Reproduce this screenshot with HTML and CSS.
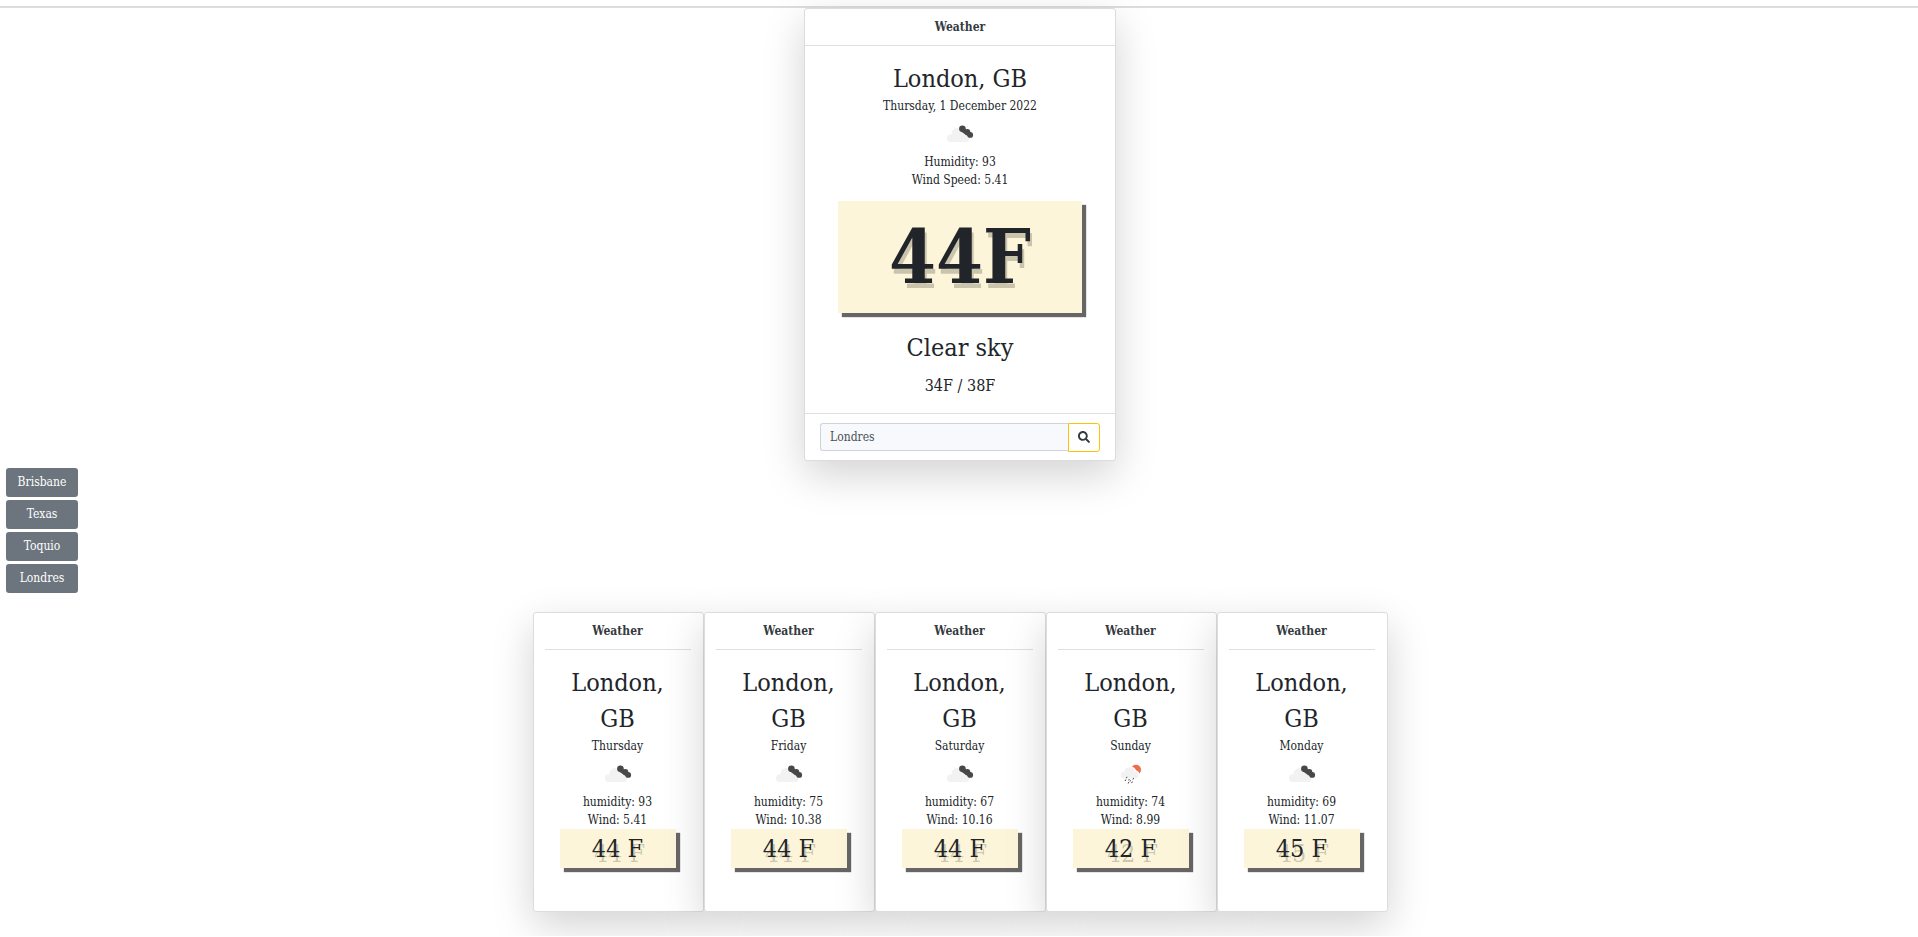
FILE: index.html
```html
<!DOCTYPE html>
<html lang="en">
<head>
<meta charset="utf-8">
<title>Weather</title>
<link rel="stylesheet" href="styles.css">
</head>
<body>
<svg class="sprite" aria-hidden="true">
  <symbol id="clouds" viewBox="0 0 28 20">
    <g fill="#f2f2f2"><circle cx="11.200" cy="9.600" r="5.600"/><circle cx="4.900" cy="14.200" r="3.900"/><circle cx="19.600" cy="14.200" r="3.900"/><path d="M4.900 18.100V12l6-4 5 1 3.700 9.100z"/><path d="M14 6l7 6v4h-9z"/></g>
    <g fill="#48484a"><circle cx="16.400" cy="4.700" r="3.300"/><circle cx="21.300" cy="7.900" r="3"/><circle cx="24.200" cy="10.900" r="2.900"/><path d="M15 7.500l8 5.500 2-4-7-5z"/></g>
  </symbol>
  <symbol id="rain" viewBox="0 0 28 20">
    <circle fill="#ec6e4c" cx="19" cy="5.800" r="5"/>
    <path fill="#fff" d="M12 1l2 1.500a6 6 0 0 1 5 3.800 5 5 0 0 1 3.500 5L12 13z"/>
    <path fill="#f2f2f2" d="M7.200 14.500a3.300 3.300 0 0 1 0-6.800A4.600 4.600 0 0 1 14 3.800a4.500 4.500 0 0 1 4 3.900 3.500 3.500 0 0 1 1 6.800z"/>
    <path stroke="#48484a" stroke-width="1" fill="none" d="M10 12.800l-.6 1.400M8.800 15.500l-.7 1.500M12.300 15l-.6 1.500M13.600 16.300l-.5 1.200M11.800 18l-.6 1.500M16.600 14l-.7 1.500M15.300 17.500l-.6 1.600"/>
  </symbol>
</svg>
<header class="topbar"></header>
<main class="page">
  <section class="card today">
    <h1 class="card-head">Weather</h1>
    <div class="card-body">
      <h2 class="place">London, GB</h2>
      <p>Thursday, 1 December 2022</p>
      <svg class="sky"><use href="#clouds"/></svg>
      <p>Humidity: 93</p>
      <p>Wind Speed: 5.41</p>
      <div class="temp temp-big">44F</div>
      <p class="place">Clear sky</p>
      <p class="range">34F / 38F</p>
    </div>
    <form class="search">
      <input class="search-input" type="text" value="Londres" aria-label="City">
      <button class="search-button" type="button" aria-label="Search"><svg viewBox="0 0 512 512" width="12" height="12"><path fill="currentColor" d="M505 442.700L405.300 343c-4.500-4.500-10.600-7-17-7H372c27.600-35.300 44-79.700 44-128C416 93.100 322.900 0 208 0S0 93.100 0 208s93.100 208 208 208c48.300 0 92.700-16.400 128-44v16.300c0 6.400 2.500 12.500 7 17l99.700 99.700c9.400 9.400 24.600 9.400 33.900 0l28.300-28.300c9.400-9.400 9.400-24.600.1-34zM208 336c-70.700 0-128-57.200-128-128 0-70.700 57.200-128 128-128 70.700 0 128 57.200 128 128 0 70.700-57.200 128-128 128z"/></svg></button>
    </form>
  </section>

  <nav class="cities" aria-label="Cities">
    <button class="city" type="button">Brisbane</button>
    <button class="city" type="button">Texas</button>
    <button class="city" type="button">Toquio</button>
    <button class="city" type="button">Londres</button>
  </nav>

  <section class="forecast">
    <article class="card day">
      <h2 class="card-head">Weather</h2>
      <div class="card-body">
        <h3 class="place">London, GB</h3>
        <p>Thursday</p>
        <svg class="sky"><use href="#clouds"/></svg>
        <p>humidity: 93</p>
        <p>Wind: 5.41</p>
        <div class="temp">44 F</div>
      </div>
    </article>
    <article class="card day">
      <h2 class="card-head">Weather</h2>
      <div class="card-body">
        <h3 class="place">London, GB</h3>
        <p>Friday</p>
        <svg class="sky"><use href="#clouds"/></svg>
        <p>humidity: 75</p>
        <p>Wind: 10.38</p>
        <div class="temp">44 F</div>
      </div>
    </article>
    <article class="card day">
      <h2 class="card-head">Weather</h2>
      <div class="card-body">
        <h3 class="place">London, GB</h3>
        <p>Saturday</p>
        <svg class="sky"><use href="#clouds"/></svg>
        <p>humidity: 67</p>
        <p>Wind: 10.16</p>
        <div class="temp">44 F</div>
      </div>
    </article>
    <article class="card day">
      <h2 class="card-head">Weather</h2>
      <div class="card-body">
        <h3 class="place">London, GB</h3>
        <p>Sunday</p>
        <svg class="sky"><use href="#rain"/></svg>
        <p>humidity: 74</p>
        <p>Wind: 8.99</p>
        <div class="temp">42 F</div>
      </div>
    </article>
    <article class="card day">
      <h2 class="card-head">Weather</h2>
      <div class="card-body">
        <h3 class="place">London, GB</h3>
        <p>Monday</p>
        <svg class="sky"><use href="#clouds"/></svg>
        <p>humidity: 69</p>
        <p>Wind: 11.07</p>
        <div class="temp">45 F</div>
      </div>
    </article>
  </section>
</main>
</body>
</html>
```
FILE: styles.css
```css
* {
  box-sizing: border-box;
}

body {
  margin: 0;
  background: #fff;
  color: #212529;
  font: 12px/18px "DejaVu Serif Condensed", "DejaVu Serif", serif;
}

h1, h2, h3, p {
  margin: 0;
  font-size: inherit;
  font-weight: 400;
}

button, input {
  font: inherit;
}

.sprite {
  display: none;
}

.topbar {
  height: 8px;
  border-bottom: 2px solid #dcdddd;
}

.page {
  padding-left: 2px;
  padding-bottom: 24px;
}

.card {
  display: flex;
  flex-direction: column;
  background: #fff;
  border: 1px solid #dcdcdc;
  border-radius: 3px;
  box-shadow: 0 14px 42px rgba(0, 0, 0, 0.175);
  text-align: center;
}

.card-head {
  padding: 9px 0;
  border-bottom: 1px solid #dfdfdf;
  font-weight: 700;
  color: #343a40;
}

.card-body {
  display: flex;
  flex-direction: column;
  align-items: center;
  padding: 15px 14px 7px;
}

.place {
  font-size: 25px;
  line-height: 36px;
}

.sky {
  width: 28px;
  height: 20px;
  margin: 9px 0;
}

.temp {
  width: 116px;
  background: #fdf5d9;
  box-shadow: 4px 4px 1px #666;
  font-size: 25px;
  line-height: 39px;
  text-shadow: 2px 5px rgba(0, 0, 0, 0.2);
}

.today {
  width: 312px;
  margin: 0 auto;
}

.temp-big {
  width: 244px;
  margin: 12px 0 17px;
  font-size: 75px;
  font-weight: 700;
  line-height: 112px;
}

.range {
  font-size: 16px;
  line-height: 40px;
}

.search {
  display: flex;
  align-items: flex-start;
  padding: 9px 15px 8px;
  border-top: 1px solid #dfdfdf;
}

.search-input {
  flex: 1;
  min-width: 0;
  height: 28px;
  padding: 0 9px;
  border: 1px solid #ced4da;
  border-right: 0;
  border-radius: 3px 0 0 3px;
  background: #f8f9fc;
  color: #495057;
}

.search-button {
  display: flex;
  align-items: center;
  justify-content: center;
  width: 32px;
  height: 29px;
  padding: 0 0 2px;
  border: 1px solid #ffc107;
  border-radius: 0 3px 3px 0;
  background: #fff;
  color: #343a40;
}

.cities {
  display: flex;
  flex-direction: column;
  gap: 3px;
  width: 72px;
  margin: 7px 4px 19px;
}

.city {
  height: 29px;
  padding: 0 0 2px;
  border: 0;
  border-radius: 3px;
  background: #6c757d;
  color: #fff;
}

.forecast {
  display: flex;
  justify-content: center;
}

.day {
  width: 171px;
  padding: 0 12px 36px 11px;
}
```
